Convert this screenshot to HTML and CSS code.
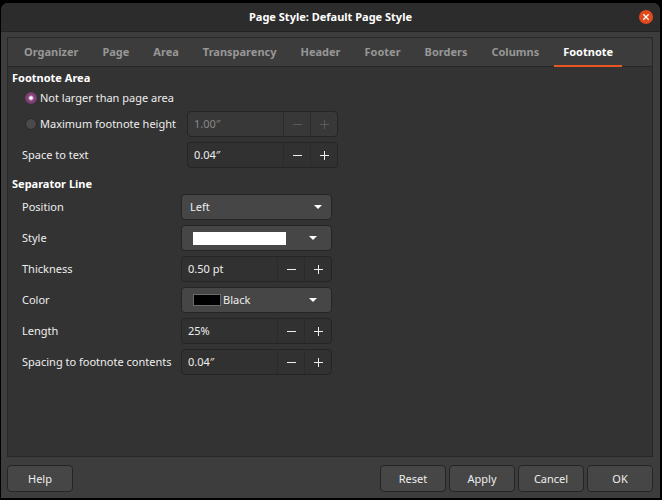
FILE: index.html
```html
<!DOCTYPE html>
<html lang="en">

<head>
    <meta charset="UTF-8">
    <meta name="viewport" content="width=device-width, initial-scale=1.0">
    <title>Page Style: Default Page Style</title>
    <link rel="stylesheet" href="styles.css">
</head>

<body>
    <svg class="sprite" aria-hidden="true">
        <symbol id="minus" viewBox="0 0 9 9"><path d="M0 4.5h9" stroke="currentColor" /></symbol>
        <symbol id="plus" viewBox="0 0 9 9"><path d="M0 4.5h9M4.5 0v9" stroke="currentColor" /></symbol>
        <symbol id="arrow" viewBox="0 0 8 4"><path d="M0 0h8L4 4z" fill="currentColor" /></symbol>
    </svg>
    <form class="dialog">
        <header class="titlebar">
            <h1>Page Style: Default Page Style</h1>
            <button type="button" class="close" aria-label="Close">
                <svg viewBox="0 0 14 14" width="14" height="14"><path d="M4.3 4.3l5.4 5.4M9.7 4.3l-5.4 5.4" stroke="#fff" stroke-width="1.3" /></svg>
            </button>
        </header>

        <main class="notebook">
            <nav class="tabs" role="tablist">
                <button type="button" role="tab">Organizer</button>
                <button type="button" role="tab">Page</button>
                <button type="button" role="tab">Area</button>
                <button type="button" role="tab">Transparency</button>
                <button type="button" role="tab">Header</button>
                <button type="button" role="tab">Footer</button>
                <button type="button" role="tab">Borders</button>
                <button type="button" role="tab">Columns</button>
                <button type="button" role="tab" class="active" aria-selected="true">Footnote</button>
            </nav>

            <div class="page">
                <h2>Footnote Area</h2>
                <div class="area">
                    <label class="radio"><input type="radio" name="height" checked>Not larger than page area</label>
                    <div class="row">
                        <label class="radio"><input type="radio" name="height">Maximum footnote height</label>
                        <div class="spin disabled">
                            <input type="text" value="1.00″" aria-label="Maximum footnote height" disabled>
                            <button type="button" aria-label="Decrease" disabled><svg><use href="#minus" /></svg></button>
                            <button type="button" aria-label="Increase" disabled><svg><use href="#plus" /></svg></button>
                        </div>
                    </div>
                    <div class="row">
                        <label for="space">Space to text</label>
                        <div class="spin">
                            <input type="text" id="space" value="0.04″">
                            <button type="button" aria-label="Decrease"><svg><use href="#minus" /></svg></button>
                            <button type="button" aria-label="Increase"><svg><use href="#plus" /></svg></button>
                        </div>
                    </div>
                </div>

                <h2>Separator Line</h2>
                <div class="separator">
                    <div class="row">
                        <label for="position">Position</label>
                        <div class="combo">
                            <select id="position">
                                <option>Left</option>
                            </select>
                            <svg class="arrow"><use href="#arrow" /></svg>
                        </div>
                    </div>
                    <div class="row">
                        <label for="style">Style</label>
                        <div class="combo swatch">
                            <select id="style">
                                <option aria-label="Solid"></option>
                            </select>
                            <span class="line"></span>
                            <svg class="arrow"><use href="#arrow" /></svg>
                        </div>
                    </div>
                    <div class="row">
                        <label for="thickness">Thickness</label>
                        <div class="spin">
                            <input type="text" id="thickness" value="0.50 pt">
                            <button type="button" aria-label="Decrease"><svg><use href="#minus" /></svg></button>
                            <button type="button" aria-label="Increase"><svg><use href="#plus" /></svg></button>
                        </div>
                    </div>
                    <div class="row">
                        <label for="color">Color</label>
                        <div class="combo swatch">
                            <select id="color">
                                <option>Black</option>
                            </select>
                            <span class="color"></span>
                            <svg class="arrow"><use href="#arrow" /></svg>
                        </div>
                    </div>
                    <div class="row">
                        <label for="length">Length</label>
                        <div class="spin">
                            <input type="text" id="length" value="25%">
                            <button type="button" aria-label="Decrease"><svg><use href="#minus" /></svg></button>
                            <button type="button" aria-label="Increase"><svg><use href="#plus" /></svg></button>
                        </div>
                    </div>
                    <div class="row">
                        <label for="spacing">Spacing to footnote contents</label>
                        <div class="spin">
                            <input type="text" id="spacing" value="0.04″">
                            <button type="button" aria-label="Decrease"><svg><use href="#minus" /></svg></button>
                            <button type="button" aria-label="Increase"><svg><use href="#plus" /></svg></button>
                        </div>
                    </div>
                </div>
            </div>
        </main>

        <footer class="actions">
            <button type="button" class="help">Help</button>
            <button type="reset">Reset</button>
            <button type="button">Apply</button>
            <button type="button">Cancel</button>
            <button type="button">OK</button>
        </footer>
    </form>
</body>

</html>
```

FILE: styles.css
```css
* {
    box-sizing: border-box;
}

body {
    margin: 0;
    padding: 3px 2px 2px 1px;
    min-height: 100vh;
    display: flex;
    background: #000;
    color: #eee;
    font: 11px/16px "Noto Sans", "Open Sans", sans-serif;
}

button,
input,
select {
    margin: 0;
    padding: 0;
    border: 0;
    background: none;
    color: inherit;
    font: inherit;
}

h1,
h2 {
    margin: 0;
    font-size: 11px;
    font-weight: 700;
    color: #fff;
}

.sprite {
    position: absolute;
    width: 0;
    height: 0;
}

.dialog {
    flex: 1;
    display: flex;
    flex-direction: column;
    border-radius: 7px 7px 0 0;
    background: #3d3d3d;
    overflow: hidden;
}

.titlebar {
    display: grid;
    grid-template-columns: 14px 1fr 14px;
    align-items: center;
    height: 29px;
    padding: 0 7px;
    border-bottom: 1px solid #232323;
    background: #2c2c2c;
}

.titlebar h1 {
    grid-column: 2;
    text-align: center;
}

.close {
    width: 14px;
    height: 14px;
    border-radius: 50%;
    background: #e2491b;
}

.close svg {
    display: block;
}

.notebook {
    flex: 1;
    display: flex;
    flex-direction: column;
    margin: 5px 7px 0 6px;
    border: 1px solid #272727;
    background: #333;
}

.tabs {
    display: flex;
    gap: 6px;
    height: 29px;
    padding: 0 7px;
    border-bottom: 1px solid #272727;
    background: #3c3c3c;
}

.tabs button {
    height: 29px;
    padding: 0 9px;
    border-bottom: 2px solid transparent;
    font-weight: 700;
    color: #979797;
}

.tabs .active {
    color: #fff;
    border-bottom-color: #e95420;
}

.page {
    padding: 3px 4px;
}

.area {
    padding-left: 10px;
    margin-bottom: 8px;
}

.separator {
    display: grid;
    gap: 5px;
    padding: 2px 0 0 10px;
}

.row {
    display: grid;
    grid-template-columns: 159px 151px;
    align-items: center;
}

.area .row {
    grid-template-columns: 165px 151px;
    margin-top: 5px;
}

.radio {
    display: flex;
    align-items: center;
    gap: 3px;
    padding: 4px 0 0 3px;
}

.row .radio {
    padding-top: 0;
}

.radio input {
    appearance: none;
    width: 12px;
    height: 12px;
    border: 1px solid #292929;
    border-radius: 50%;
    background: #4a4a4a;
}

.radio input:checked {
    border-color: #74396b;
    background: radial-gradient(circle, #fff 1px, #84427a 3px);
}

.spin {
    display: flex;
    height: 26px;
    border: 1px solid #252525;
    border-radius: 4px;
    background: #313131;
}

.spin input {
    flex: 1;
    min-width: 0;
    padding-left: 6px;
}

.spin button {
    display: grid;
    place-items: center;
    width: 27px;
    border-left: 1px solid #2b2b2b;
}

.spin svg {
    width: 9px;
    height: 9px;
}

.spin.disabled {
    background: #383838;
    color: #888;
}

.spin.disabled button {
    color: #5a5a5a;
}

.combo {
    position: relative;
    display: flex;
}

.combo select {
    appearance: none;
    width: 100%;
    height: 26px;
    padding-left: 8px;
    border: 1px solid #252525;
    border-radius: 4px;
    background: #464646;
}

.combo .arrow {
    position: absolute;
    top: 11px;
    right: 10px;
    width: 8px;
    height: 4px;
    color: #fff;
    pointer-events: none;
}

.combo.swatch .arrow {
    right: 15px;
}

.combo.swatch select {
    padding-left: 41px;
}

.combo span {
    position: absolute;
    left: 12px;
    pointer-events: none;
}

.line {
    top: 7px;
    width: 93px;
    height: 13px;
    background: #fff;
}

.color {
    top: 7px;
    width: 28px;
    height: 12px;
    border: 1px solid #6a6a6a;
    background: #000;
}

.actions {
    display: flex;
    gap: 3px;
    padding: 8px 7px 6px 6px;
}

.actions button {
    width: 66px;
    height: 27px;
    border: 1px solid #252525;
    border-radius: 4px;
    background: #464646;
}

.help {
    margin-right: auto;
}
```
